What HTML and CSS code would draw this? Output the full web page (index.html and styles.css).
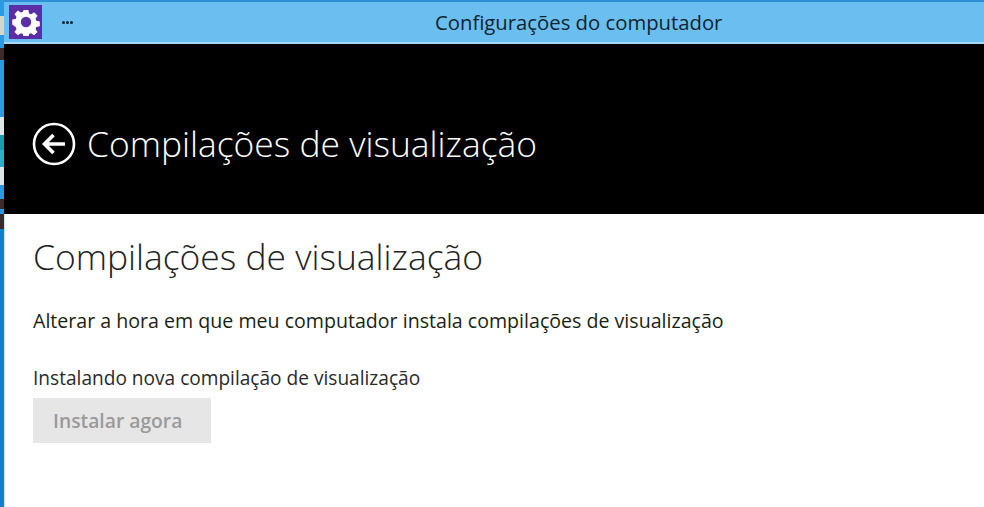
FILE: index.html
```html
<!DOCTYPE html>
<html lang="pt-BR">
<head>
  <meta charset="UTF-8" />
  <title>Configurações do computador</title>
  <link rel="stylesheet" href="styles.css">
</head>
<body>

<!-- Sliver of the desktop behind the window -->
<div class="desktop-strip">
  <span class="seg-blue h16"></span>
  <span class="seg-tan h19"></span>
  <span class="seg-blue h13"></span>
  <span class="seg-dark h12"></span>
  <span class="seg-blue h57"></span>
  <span class="seg-light h18"></span>
  <span class="seg-teal h15"></span>
  <span class="seg-cyan h17"></span>
  <span class="seg-light h18"></span>
  <span class="seg-blue h14"></span>
  <span class="seg-dark h10"></span>
  <span class="seg-blue h5"></span>
  <span class="seg-dark h15"></span>
  <span class="seg-deep"></span>
</div>

<div class="window">
  <div class="titlebar">
    <div class="app-icon">
      <svg width="28" height="28" viewBox="0 0 28 28">
        <path fill="#fff" fill-rule="evenodd" d="M11.6 2h4.8l.7 3.5 2 .8 3-2 3.4 3.4-2 3 .8 2 3.5.7v4.8l-3.5.7-.8 2 2 3-3.4 3.4-3-2-2 .8-.7 3.5h-4.8l-.7-3.5-2-.8-3 2-3.4-3.4 2-3-.8-2L.2 16.400v-4.800l3.500-.7.8-2-2-3L5.900 2.500l3 2 2-.8zM14 8.800a5.200 5.200 0 1 0 0 10.400 5.200 5.200 0 0 0 0-10.400z"/>
      </svg>
    </div>
    <div class="dots"><span></span><span></span><span></span></div>
    <div class="window-title">Configurações do computador</div>
  </div>

  <div class="header">
    <svg class="back-icon" width="44" height="44" viewBox="0 0 44 44">
      <circle cx="22" cy="22" r="20" fill="none" stroke="#fff" stroke-width="2.6"/>
      <path d="M33 22H13M21.500 13L12.500 22l9 9" fill="none" stroke="#fff" stroke-width="3.600"/>
    </svg>
    <h1 class="header-title">Compilações de visualização</h1>
  </div>

  <div class="content">
    <h2 class="section-title">Compilações de visualização</h2>
    <p class="subtitle">Alterar a hora em que meu computador instala compilações de visualização</p>
    <p class="status">Instalando nova compilação de visualização</p>
    <button class="install-button" disabled>Instalar agora</button>
  </div>
</div>

</body>
</html>
```

FILE: styles.css
```css
html, body {
  height: 100%;
}

body {
  margin: 0;
  display: flex;
  overflow: hidden;
  background: white;
  font-family: "Open Sans", "Noto Sans", sans-serif;
}

.desktop-strip {
  width: 4px;
  flex-shrink: 0;
  display: flex;
  flex-direction: column;
}

.desktop-strip span { display: block; }

.h5 { height: 5px; }
.h10 { height: 10px; }
.h12 { height: 12px; }
.h13 { height: 13px; }
.h14 { height: 14px; }
.h15 { height: 15px; }
.h16 { height: 16px; }
.h17 { height: 17px; }
.h18 { height: 18px; }
.h19 { height: 19px; }
.h57 { height: 57px; }

.seg-blue { background: #2a9ae2; }
.seg-tan { background: #d6d6c6; }
.seg-dark { background: #3a2a2a; }
.seg-light { background: #dfe6ea; }
.seg-teal { background: #1a9fa8; }
.seg-cyan { background: #2cb0c8; }
.desktop-strip .seg-deep { flex: 1; background: #0f7fd0; }

.window {
  flex: 1;
  min-width: 0;
  display: flex;
  flex-direction: column;
}

.titlebar {
  height: 44px;
  box-sizing: border-box;
  display: flex;
  align-items: center;
  background: #6bbef0;
  border-top: 2px solid #2f8fd8;
  border-bottom: 2px solid #a4d8f6;
  position: relative;
}

.app-icon {
  width: 33px;
  height: 34px;
  margin-left: 5px;
  background: #5a2ea6;
  display: flex;
  align-items: center;
  justify-content: center;
}

.dots {
  margin-left: 20px;
  display: flex;
  gap: 1px;
}

.dots span {
  width: 3px;
  height: 3px;
  border-radius: 50%;
  background: #10202c;
}

.window-title {
  position: absolute;
  left: 431px;
  top: 8px;
  font-size: 20.3px;
  line-height: 24px;
  color: #12242f;
}

.header {
  height: 170px;
  box-sizing: border-box;
  padding: 78px 0 0 28px;
  display: flex;
  align-items: flex-start;
  background: black;
}

.back-icon {
  flex-shrink: 0;
}

.header-title {
  margin: -5px 0 0 11px;
  font-size: 35.4px;
  font-weight: 300;
  line-height: 52px;
  color: white;
}

.content {
  flex: 1;
  padding: 0 0 0 29px;
  border-left: 1px solid #cfe6f6;
}

.section-title {
  margin: 20px 0 0 -1px;
  font-size: 35.4px;
  font-weight: 300;
  line-height: 44px;
  color: #222;
}

.subtitle {
  margin: 30px 0 0 -1px;
  font-size: 19.6px;
  line-height: 26px;
  color: #1a1f12;
}

.status {
  margin: 31px 0 0 -1px;
  font-size: 19.1px;
  line-height: 26px;
  color: #2a2a2a;
}

.install-button {
  display: block;
  margin: 7px 0 0 -1px;
  width: 178px;
  height: 45px;
  border: none;
  padding: 0 0 0 20px;
  text-align: left;
  background: #e6e6e6;
  font-family: inherit;
  font-size: 19.3px;
  font-weight: 600;
  color: #9a9a9a;
}
```
